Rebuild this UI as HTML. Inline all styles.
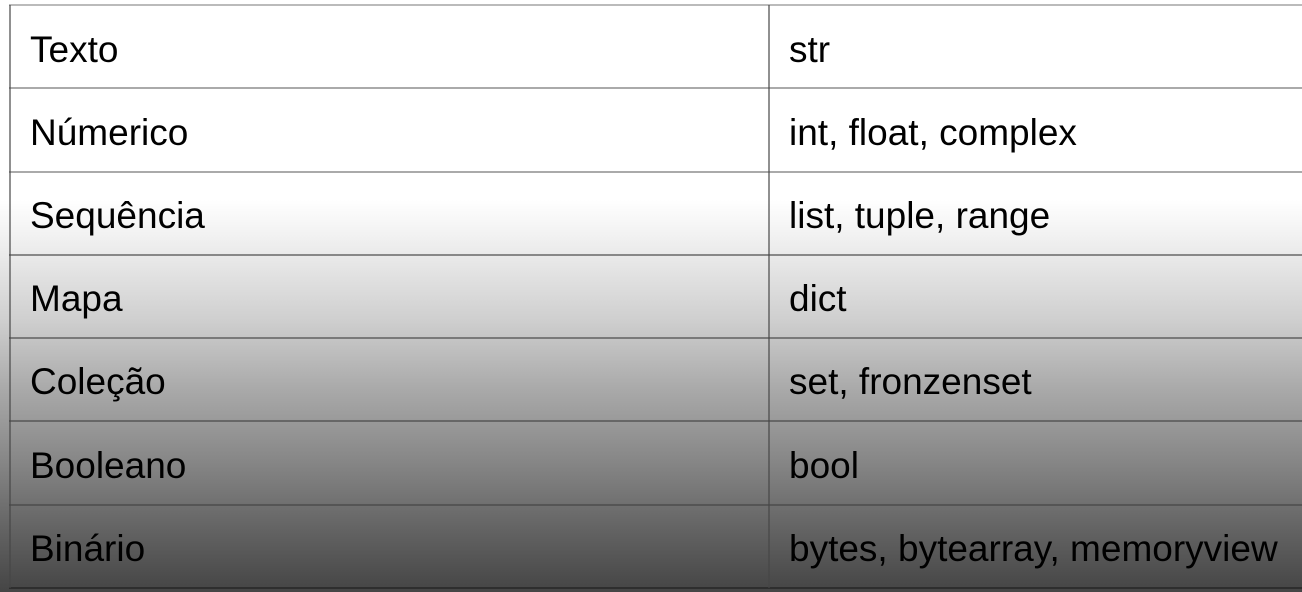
<!DOCTYPE html>
<html><head><style>
html,body{margin:0;padding:0;width:1302px;height:592px;overflow:hidden}
body{background:linear-gradient(to bottom,#fff 0px,#fff 200px,#eaeaea 255px,#cfcfcf 320px,#a9a9a9 390px,#878787 460px,#636363 530px,#454545 592px);position:relative;font-family:"Liberation Sans",Arial,sans-serif}
.h{position:absolute;left:9px;width:1300px;height:2px;background:rgba(70,70,70,0.6)}
.v{position:absolute;top:5px;height:583px;width:2px;background:rgba(70,70,70,0.6)}
.t{position:absolute;font-size:37px;color:#000;line-height:1;white-space:nowrap}
</style></head><body>
<div class="h" style="top:4px;background:#bbb"></div>
<div class="h" style="top:87px;background:#aaa"></div>
<div class="h" style="top:171px;background:#aaa"></div>
<div class="h" style="top:254px"></div>
<div class="h" style="top:337px"></div>
<div class="h" style="top:420px"></div>
<div class="h" style="top:504px;background:#555"></div>
<div class="h" style="top:587px;background:#2e2e2e"></div>
<div class="v" style="left:9px"></div>
<div class="v" style="left:768px"></div>
<div class="t" style="left:30px;top:31px">Texto</div><div class="t" style="left:789px;top:31px">str</div>
<div class="t" style="left:30px;top:114px">Númerico</div><div class="t" style="left:789px;top:114px">int, float, complex</div>
<div class="t" style="left:30px;top:197px">Sequência</div><div class="t" style="left:789px;top:197px">list, tuple, range</div>
<div class="t" style="left:30px;top:280px">Mapa</div><div class="t" style="left:789px;top:280px">dict</div>
<div class="t" style="left:30px;top:363px">Coleção</div><div class="t" style="left:789px;top:363px">set, fronzenset</div>
<div class="t" style="left:30px;top:447px">Booleano</div><div class="t" style="left:789px;top:447px">bool</div>
<div class="t" style="left:30px;top:530px">Binário</div><div class="t" style="left:789px;top:530px">bytes, bytearray, memoryview</div>
</body></html>
